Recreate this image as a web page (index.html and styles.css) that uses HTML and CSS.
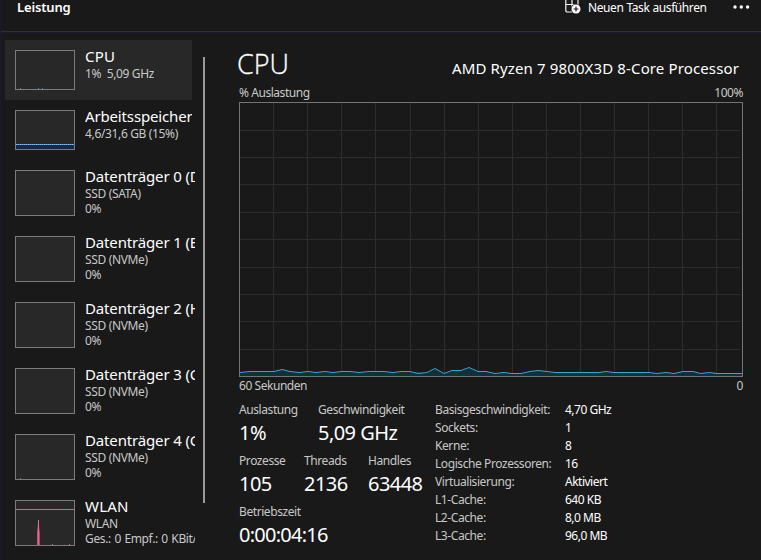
FILE: index.html
```
<!DOCTYPE html>
<html lang="de">
<head>
<meta charset="utf-8">
<title>Leistung</title>
<link rel="stylesheet" href="styles.css">
</head>
<body>
<div class="app">
  <header class="topbar">
    <h1 class="page-title">Leistung</h1>
    <div class="run-task">
      <svg class="run-icon" width="16" height="16" viewBox="0 0 16 16"><path d="M7 0V12H2.500Q.8 12 .8 10.500V0M.8 4.500H13V0" fill="none" stroke="#f4f4f4" stroke-width="1.200"/><circle cx="11" cy="9" r="5.200" fill="#191919"/><circle cx="11" cy="9" r="4.500" fill="#fff"/><path d="M11 6.500v5M8.500 9h5" stroke="#191919" stroke-width="1.200"/></svg>
      <span class="run-label">Neuen Task ausführen</span>
    </div>
    <svg class="more" width="17" height="4" viewBox="0 0 17 4"><g fill="#fff"><circle cx="2" cy="2" r="1.700"/><circle cx="8.300" cy="2" r="1.700"/><circle cx="14.600" cy="2" r="1.700"/></g></svg>
  </header>
  <div class="content">
    <nav class="sidebar">
      <div class="item short active">
        <svg class="thumb" width="60" height="40" viewBox="0 0 60 40"><rect class="frame" x=".5" y=".5" width="59" height="39"/><path d="M5 38.500h1M23 38.500h1M27 38.500h1" stroke="#2f86b8"/></svg>
        <div class="info"><div class="name caps">CPU</div><div class="sub">1%&nbsp; 5,09 GHz</div></div>
      </div>
      <div class="item short">
        <svg class="thumb" width="60" height="40" viewBox="0 0 60 40"><rect class="frame" x=".5" y=".5" width="59" height="39"/><path d="M1 35h58v4H1z" fill="#182848"/><path d="M1 34.500h58" stroke="#438ed8"/><path d="M1 34.500h58" stroke="#8fc5f3" stroke-dasharray="1 1"/></svg>
        <div class="info"><div class="name">Arbeitsspeicher</div><div class="sub">4,6/31,6 GB (15%)</div></div>
      </div>
      <div class="item">
        <svg class="thumb" width="60" height="46" viewBox="0 0 60 46"><rect class="frame" x=".5" y=".5" width="59" height="45"/></svg>
        <div class="info"><div class="name">Datenträger 0 (D:)</div><div class="sub">SSD (SATA)</div><div class="sub">0%</div></div>
      </div>
      <div class="item">
        <svg class="thumb" width="60" height="46" viewBox="0 0 60 46"><rect class="frame" x=".5" y=".5" width="59" height="45"/></svg>
        <div class="info"><div class="name">Datenträger 1 (E:)</div><div class="sub">SSD (NVMe)</div><div class="sub">0%</div></div>
      </div>
      <div class="item">
        <svg class="thumb" width="60" height="46" viewBox="0 0 60 46"><rect class="frame" x=".5" y=".5" width="59" height="45"/></svg>
        <div class="info"><div class="name">Datenträger 2 (H:)</div><div class="sub">SSD (NVMe)</div><div class="sub">0%</div></div>
      </div>
      <div class="item">
        <svg class="thumb" width="60" height="46" viewBox="0 0 60 46"><rect class="frame" x=".5" y=".5" width="59" height="45"/></svg>
        <div class="info"><div class="name">Datenträger 3 (C:)</div><div class="sub">SSD (NVMe)</div><div class="sub">0%</div></div>
      </div>
      <div class="item">
        <svg class="thumb" width="60" height="46" viewBox="0 0 60 46"><rect class="frame" x=".5" y=".5" width="59" height="45"/><path d="M5 44.500h1" stroke="#a87518"/></svg>
        <div class="info"><div class="name">Datenträger 4 (G:)</div><div class="sub">SSD (NVMe)</div><div class="sub">0%</div></div>
      </div>
      <div class="item">
        <svg class="thumb" width="60" height="46" viewBox="0 0 60 46"><rect class="frame" x=".5" y=".5" width="59" height="45"/><path d="M1 9.500h58" stroke="#dc6084"/><path d="M22 45v-12l1.300-13 1.500 13v12z" fill="#bb5574"/><path d="M23.500 20v25" stroke="#f4648c"/><path d="M37 44.500h1M54 44.500h1" stroke="#dc6084"/></svg>
        <div class="info"><div class="name caps">WLAN</div><div class="sub">WLAN</div><div class="sub net">Ges.: 0 Empf.: 0 KBit/s</div></div>
      </div>
    </nav>
    <div class="scroll"><div class="scroll-thumb"></div></div>
    <main class="detail">
      <div class="heading"><h2 class="cpu-title">CPU</h2><div class="model">AMD Ryzen 7 9800X3D 8-Core Processor</div></div>
      <div class="axis axis-top"><span>% Auslastung</span><span>100%</span></div>
      <svg class="graph" width="504" height="275" viewBox="0 0 504 275">
        <path class="grid" d="M34.500 1v273M68.500 1v273M102.500 1v273M136.500 1v273M171.500 1v273M205.500 1v273M239.500 1v273M273.500 1v273M307.500 1v273M341.500 1v273M375.500 1v273M409.500 1v273M443.500 1v273M477.500 1v273M1 28.500h500M1 55.500h500M1 82.500h500M1 110.500h500M1 137.500h500M1 165.500h500M1 192.500h500M1 219.500h500M1 247.500h500"/>
        <path class="area" d="M1 270.500L11 269.500H35L43 267.500L51 269.500L60 270.500L69 269.500L77 270.500L86 269.500L94 270.500L103 269.500H111L120 270.500L130 269.500H145L154 270.500L162 269.500L171 270.500L180 269.500L188 271.500H188L196 266.500L205 271.500L213 268.500H222L230 265.500L239 269.500H247L256 271.500L265 270.500L273 271.500H282L291 269.500L299 268.500L308 269.500L316 270.500H360L367 269.500L375 270.500H410L418 271.500L427 270.500L435 271.500L444 269.500H454L462 271.500L470 270.500L478 271.500H503V274H1z"/>
        <path class="line" d="M1 270.500L11 269.500H35L43 267.500L51 269.500L60 270.500L69 269.500L77 270.500L86 269.500L94 270.500L103 269.500H111L120 270.500L130 269.500H145L154 270.500L162 269.500L171 269.500L179 271.500L188 270.500L196 266.500L205 271.500L213 268.500H222L230 265.500L239 269.500H247L256 271.500L265 270.500L273 271.500H282L291 269.500L299 268.500L308 269.500L316 270.500H360L367 269.500L375 270.500H410L418 271.500L427 270.500L435 271.500L444 269.500H454L462 271.500L470 270.500L478 271.500H503"/>
        <rect class="border" x=".5" y=".5" width="503" height="274"/>
      </svg>
      <div class="axis axis-bottom"><span>60 Sekunden</span><span>0</span></div>
      <div class="stats">
        <div class="primary">
          <div class="row">
            <div class="stat c1"><div class="label">Auslastung</div><div class="value">1%</div></div>
            <div class="stat"><div class="label">Geschwindigkeit</div><div class="value">5,09 GHz</div></div>
          </div>
          <div class="row">
            <div class="stat c2"><div class="label">Prozesse</div><div class="value">105</div></div>
            <div class="stat c3"><div class="label">Threads</div><div class="value">2136</div></div>
            <div class="stat"><div class="label">Handles</div><div class="value">63448</div></div>
          </div>
          <div class="row">
            <div class="stat"><div class="label">Betriebszeit</div><div class="value uptime">0:00:04:16</div></div>
          </div>
        </div>
        <dl class="specs">
          <dt>Basisgeschwindigkeit:</dt><dd>4,70 GHz</dd>
          <dt>Sockets:</dt><dd>1</dd>
          <dt>Kerne:</dt><dd>8</dd>
          <dt>Logische Prozessoren:</dt><dd>16</dd>
          <dt>Virtualisierung:</dt><dd>Aktiviert</dd>
          <dt>L1-Cache:</dt><dd>640 KB</dd>
          <dt>L2-Cache:</dt><dd>8,0 MB</dd>
          <dt>L3-Cache:</dt><dd>96,0 MB</dd>
        </dl>
      </div>
    </main>
  </div>
</div>
</body>
</html>
```
FILE: styles.css
```
* { box-sizing: border-box; }
body { margin: 0; background: #191919; color: #fff; font: 12px/15px "Noto Sans", "Open Sans", sans-serif; letter-spacing: -0.35px; overflow: hidden; }
h1, h2, dl, dd { margin: 0; font-weight: 400; }
svg { display: block; flex: none; }
.app { width: 761px; height: 560px; border-left: 1px solid #181a30; overflow: hidden; }
.topbar { height: 33px; display: flex; align-items: flex-start; border-bottom: 1px solid #1b1b30; box-shadow: inset 0 -1px #303030; }
.page-title { font-size: 13px; line-height: 15px; font-weight: 600; letter-spacing: -0.15px; margin-left: 16px; flex: 1; }
.run-task { display: flex; gap: 7px; width: 168px; }
.run-label { white-space: nowrap; letter-spacing: -0.42px; word-spacing: 0.4px; }
.more { margin: 5px 11px 0 0; }
.content { display: flex; height: 527px; padding-top: 7px; }
.sidebar { width: 190px; margin-left: 4px; overflow: hidden; }
.item { width: 190px; height: 66px; padding-left: 10px; display: flex; gap: 10px; }
.item.short { height: 60px; width: 187px; }
.active { background: #282828; }
.thumb { margin-top: 10px; }
.frame { fill: #282828; stroke: #7c7c7c; }
.info { padding-top: 6px; white-space: nowrap; overflow: hidden; }
.name { font-size: 15px; line-height: 20px; letter-spacing: -0.15px; }
.caps { letter-spacing: 0.2px; }
.sub { color: #c8c8c8; }
.net { word-spacing: 0.7px; }
.scroll { width: 10px; padding: 17px 0 0 8px; }
.scroll-thumb { width: 2px; height: 446px; background: #9a9a9a; }
.detail { width: 505px; margin-left: 34px; }
.heading { height: 45px; display: flex; justify-content: space-between; align-items: baseline; padding: 5px 5px 0 0; }
.cpu-title { font: 300 27px/37px "Open Sans", "Noto Sans", sans-serif; -webkit-text-stroke: 0.3px #fff; letter-spacing: 0; margin-left: -2px; }
.model { font-size: 15px; line-height: 20px; letter-spacing: 0.13px; }
.axis { display: flex; justify-content: space-between; width: 504px; color: #c8c8c8; letter-spacing: -0.45px; }
.axis-top { height: 17px; }
.axis-bottom { height: 25px; padding-top: 1px; }
.grid { fill: none; stroke: #2d2d2d; }
.area { fill: #123039; }
.line { fill: none; stroke: #35a5d2; }
.border { fill: none; stroke: #747474; }
.stats { display: flex; }
.primary { width: 196px; }
.row { display: flex; height: 51px; }
.c1 { width: 79px; }
.c2 { width: 65px; }
.c3 { width: 64px; }
.stat { white-space: nowrap; }
.label, dt { color: #c8c8c8; letter-spacing: -0.42px; }
.value { font-size: 20px; line-height: 31px; letter-spacing: -0.55px; }
.uptime { letter-spacing: -0.75px; }
.specs { display: grid; grid-template-columns: 130px 100px; grid-auto-rows: 18px; }
dd { letter-spacing: -0.5px; }
```
